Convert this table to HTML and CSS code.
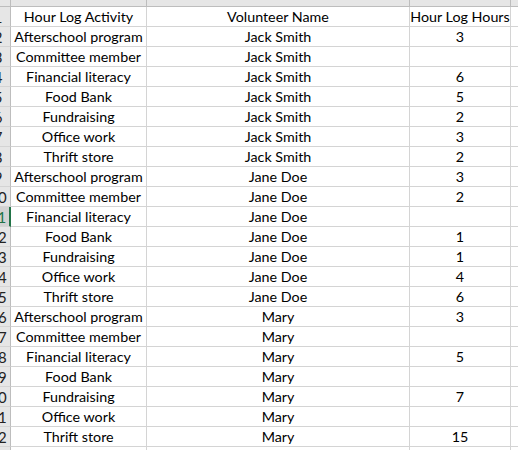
FILE: index.html
```html
<!DOCTYPE html>
<html>
<head>
<meta charset="utf-8">
<link rel="stylesheet" href="styles.css">
</head>
<body>
<div class="sheet">
  <div class="row colhead">
    <div class="rh"></div>
    <div class="ch ch-a"><span>C</span></div>
    <div class="ch ch-b"><span>D</span></div>
    <div class="ch ch-c"><span>E</span></div>
    <div class="ch ch-d"></div>
  </div>
  <div class="row"><div class="rh">1</div><div class="c">Hour Log Activity</div><div class="c">Volunteer Name</div><div class="c">Hour Log Hours</div><div class="c"></div></div>
  <div class="row"><div class="rh">2</div><div class="c">Afterschool program</div><div class="c">Jack Smith</div><div class="c">3</div><div class="c"></div></div>
  <div class="row"><div class="rh">3</div><div class="c">Committee member</div><div class="c">Jack Smith</div><div class="c"></div><div class="c"></div></div>
  <div class="row"><div class="rh">4</div><div class="c">Financial literacy</div><div class="c">Jack Smith</div><div class="c">6</div><div class="c"></div></div>
  <div class="row"><div class="rh">5</div><div class="c">Food Bank</div><div class="c">Jack Smith</div><div class="c">5</div><div class="c"></div></div>
  <div class="row"><div class="rh">6</div><div class="c">Fundraising</div><div class="c">Jack Smith</div><div class="c">2</div><div class="c"></div></div>
  <div class="row"><div class="rh">7</div><div class="c">Office work</div><div class="c">Jack Smith</div><div class="c">3</div><div class="c"></div></div>
  <div class="row"><div class="rh">8</div><div class="c">Thrift store</div><div class="c">Jack Smith</div><div class="c">2</div><div class="c"></div></div>
  <div class="row"><div class="rh">9</div><div class="c">Afterschool program</div><div class="c">Jane Doe</div><div class="c">3</div><div class="c"></div></div>
  <div class="row"><div class="rh">10</div><div class="c">Committee member</div><div class="c">Jane Doe</div><div class="c">2</div><div class="c"></div></div>
  <div class="row"><div class="rh active">11</div><div class="c">Financial literacy</div><div class="c">Jane Doe</div><div class="c"></div><div class="c"></div></div>
  <div class="row"><div class="rh">12</div><div class="c">Food Bank</div><div class="c">Jane Doe</div><div class="c">1</div><div class="c"></div></div>
  <div class="row"><div class="rh">13</div><div class="c">Fundraising</div><div class="c">Jane Doe</div><div class="c">1</div><div class="c"></div></div>
  <div class="row"><div class="rh">14</div><div class="c">Office work</div><div class="c">Jane Doe</div><div class="c">4</div><div class="c"></div></div>
  <div class="row"><div class="rh">15</div><div class="c">Thrift store</div><div class="c">Jane Doe</div><div class="c">6</div><div class="c"></div></div>
  <div class="row"><div class="rh">16</div><div class="c">Afterschool program</div><div class="c">Mary</div><div class="c">3</div><div class="c"></div></div>
  <div class="row"><div class="rh">17</div><div class="c">Committee member</div><div class="c">Mary</div><div class="c"></div><div class="c"></div></div>
  <div class="row"><div class="rh">18</div><div class="c">Financial literacy</div><div class="c">Mary</div><div class="c">5</div><div class="c"></div></div>
  <div class="row"><div class="rh">19</div><div class="c">Food Bank</div><div class="c">Mary</div><div class="c"></div><div class="c"></div></div>
  <div class="row"><div class="rh">20</div><div class="c">Fundraising</div><div class="c">Mary</div><div class="c">7</div><div class="c"></div></div>
  <div class="row"><div class="rh">21</div><div class="c">Office work</div><div class="c">Mary</div><div class="c"></div><div class="c"></div></div>
  <div class="row"><div class="rh">22</div><div class="c">Thrift store</div><div class="c">Mary</div><div class="c">15</div><div class="c"></div></div>
  <div class="row"><div class="rh">23</div><div class="c"></div><div class="c"></div><div class="c"></div><div class="c"></div></div>
</div>
</body>
</html>
```

FILE: styles.css
```css
html, body {
  margin: 0;
  padding: 0;
  background: #ffffff;
}
.sheet {
  width: 518px;
  height: 450px;
  overflow: hidden;
  font-family: Lato, "Open Sans", sans-serif;
  font-size: 14.3px;
  color: #000000;
}
.row {
  display: grid;
  grid-template-columns: 25px 136px 263px 101px 60px;
  margin-left: -14px;
  height: 20px;
}
.colhead {
  height: 7px;
}
.rh {
  background: #e6e6e6;
  border-right: 1px solid #bdbdbd;
  border-bottom: 1px solid #d4d4d4;
  color: #222222;
  text-align: center;
  font-size: 15px;
  line-height: 20px;
  box-sizing: border-box;
  overflow: hidden;
}
.colhead .rh {
  border-bottom: 1px solid #bdbdbd;
}
.rh.active {
  background: #d2d2d2;
  color: #217346;
  border-right: 2px solid #217346;
}
.ch {
  background: #e6e6e6;
  border-right: 1px solid #bdbdbd;
  border-bottom: 1px solid #bdbdbd;
  box-sizing: border-box;
  overflow: hidden;
  color: #444444;
  line-height: 19px;
}
.ch span {
  display: block;
  margin-top: -15px;
}
.ch-a { padding-left: 88px; }
.ch-b { padding-left: 119px; }
.ch-c { text-align: center; }
.c {
  border-right: 1px solid #d4d4d4;
  border-bottom: 1px solid #d4d4d4;
  box-sizing: border-box;
  text-align: center;
  line-height: 20px;
  white-space: nowrap;
  overflow: hidden;
}
```
